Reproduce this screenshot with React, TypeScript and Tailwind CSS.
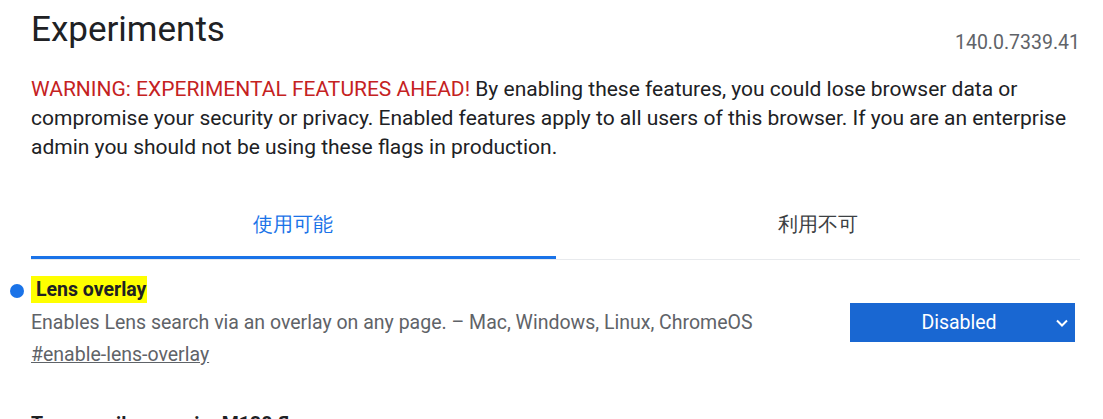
export default function App() {
  return (
    <main className="min-h-screen bg-white font-['Roboto',sans-serif] text-[#202124]">
      <div className="ml-[31px] w-[1049px]">
        <header className="flex items-start justify-between pt-[8px]">
          <h1 className="text-[35px] leading-[44px] font-normal">Experiments</h1>
          <span className="mt-[23px] text-[19.5px] leading-[24px] text-[#5f6368]">140.0.7339.41</span>
        </header>

        <p className="mt-[20px] text-[21px] leading-[29px]">
          <span className="text-[#c5221f]">WARNING: EXPERIMENTAL FEATURES AHEAD!</span> By enabling these
          features, you could lose browser data or compromise your security or privacy. Enabled features
          apply to all users of this browser. If you are an enterprise admin you should not be using these
          flags in production.
        </p>

        <nav className="mt-[31px] flex border-b border-[#e8eaed]">
          <button
            type="button"
            className="flex h-[66px] flex-1 items-center justify-center border-b-[3px] border-[#1a73e8] text-[19.5px] text-[#1a73e8]"
          >
            使用可能
          </button>
          <button
            type="button"
            className="flex h-[66px] flex-1 items-center justify-center border-b-[3px] border-transparent text-[19.5px] text-[#3c4043]"
          >
            利用不可
          </button>
        </nav>

        <section className="relative mt-[16px] flex items-start justify-between">
          <span className="absolute left-[-21px] top-[8px] h-[14px] w-[14px] rounded-full bg-[#1a73e8]" />
          <div>
            <h2 className="text-[19.5px] leading-[28px] font-bold">
              <span className="bg-[#ffff00] py-[2px] pl-[5px] pr-[1px]">Lens overlay</span>
            </h2>
            <p className="mt-[3px] text-[19.5px] leading-[32px] text-[#5f6368]">
              Enables Lens search via an overlay on any page. – Mac, Windows, Linux, ChromeOS
            </p>
            <a href="#" className="text-[19.5px] leading-[32px] text-[#5f6368] underline">
              #enable-lens-overlay
            </a>
          </div>
          <div className="mr-[5px] mt-[27px] flex h-[39px] w-[225px] items-center bg-[#1967d2] text-white">
            <span className="flex-1 pl-[12px] text-center text-[19.5px]">Disabled</span>
            <svg width="12" height="8" viewBox="0 0 12 8" className="mr-[7px]" fill="none">
              <path d="M1 1.5l5 5 5-5" stroke="white" strokeWidth="2" />
            </svg>
          </div>
        </section>

        <h2 className="mt-[40px] text-[19.5px] leading-[28px] font-bold">Temporarily unexpire M138 flags.</h2>
      </div>
    </main>
  );
}
